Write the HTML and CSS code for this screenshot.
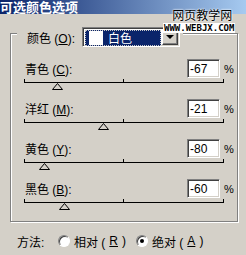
FILE: index.html
```html
<!DOCTYPE html>
<html lang="zh-CN">
<head>
  <meta charset="UTF-8">
  <title>可选颜色选项</title>
  <link rel="stylesheet" href="styles.css">
</head>
<body>
<div class="dialog">
  <div class="titlebar">可选颜色选项</div>

  <div class="watermark">
    <div class="wm-cn">网页教学网</div>
    <div class="wm-url">WWW.WEBJX.COM</div>
  </div>

  <fieldset class="group">
    <legend class="group-head">
      <span class="label">颜色 (<u>O</u>):</span>
      <span class="select">
        <span class="select-value"><span class="swatch"></span><span class="select-text">白色</span></span>
        <span class="select-btn"><span class="arrow"></span></span>
      </span>
    </legend>

    <div class="channels">
      <div class="channel">
        <div class="channel-top">
          <span class="label">青色 (<u>C</u>):</span>
          <span class="field">-67</span>
          <span class="pct">%</span>
        </div>
        <div class="slider">
          <span class="thumb" style="left: 16.5%"><svg width="11" height="7"><path d="M5.5 0.5 L10.5 6.5 L0.5 6.5 Z" fill="none" stroke="#000"/></svg></span>
        </div>
      </div>

      <div class="channel">
        <div class="channel-top">
          <span class="label">洋红 (<u>M</u>):</span>
          <span class="field">-21</span>
          <span class="pct">%</span>
        </div>
        <div class="slider">
          <span class="thumb" style="left: 39.5%"><svg width="11" height="7"><path d="M5.5 0.5 L10.5 6.5 L0.5 6.5 Z" fill="none" stroke="#000"/></svg></span>
        </div>
      </div>

      <div class="channel">
        <div class="channel-top">
          <span class="label">黄色 (<u>Y</u>):</span>
          <span class="field">-80</span>
          <span class="pct">%</span>
        </div>
        <div class="slider">
          <span class="thumb" style="left: 10%"><svg width="11" height="7"><path d="M5.5 0.5 L10.5 6.5 L0.5 6.5 Z" fill="none" stroke="#000"/></svg></span>
        </div>
      </div>

      <div class="channel">
        <div class="channel-top">
          <span class="label">黑色 (<u>B</u>):</span>
          <span class="field">-60</span>
          <span class="pct">%</span>
        </div>
        <div class="slider">
          <span class="thumb" style="left: 20%"><svg width="11" height="7"><path d="M5.5 0.5 L10.5 6.5 L0.5 6.5 Z" fill="none" stroke="#000"/></svg></span>
        </div>
      </div>
    </div>
  </fieldset>

  <div class="method">
    <span class="method-label">方法:</span>
    <span class="option"><span class="radio"></span>相对 (<u>R</u>)</span>
    <span class="option"><span class="radio checked"></span>绝对 (<u>A</u>)</span>
  </div>
</div>
</body>
</html>
```

FILE: styles.css
```css
body {
  margin: 0;
  background-color: #d4d0c8;
  font-family: "Liberation Sans", "Noto Sans CJK SC", sans-serif;
  font-size: 12px;
  color: #000;
}
.dialog {
  position: relative;
  width: 246px;
  height: 255px;
  overflow: hidden;
}
.titlebar {
  height: 14px;
  line-height: 14px;
  background: linear-gradient(to right, #0a246a, #a6caf0);
  color: #fff;
  font-family: "Noto Sans CJK SC", sans-serif;
  font-size: 13px;
  font-weight: bold;
  white-space: nowrap;
}
.watermark {
  position: absolute;
  top: 8px;
  left: 163px;
  text-align: center;
}
.wm-cn {
  font-family: "Noto Sans CJK SC", sans-serif;
  font-size: 12px;
  line-height: 14px;
  padding-left: 6px;
  text-shadow: 0 0 2px #fff, 0 0 2px #fff;
}
.wm-url {
  margin-top: 1px;
  padding: 0 1px;
  background-color: #fff;
  font-family: "DejaVu Sans Mono", monospace;
  font-size: 9px;
  font-weight: bold;
  line-height: 10px;
}
.group {
  margin: 6px 8px 0 10px;
  padding: 0 0 10px 0;
  border: 1px solid #808080;
  box-shadow: inset 1px 1px 0 #fff, 1px 1px 0 #fff;
  min-width: 0;
}
.group-head {
  display: flex;
  align-items: center;
  margin-left: 6px;
  padding: 7px 3px 0 10px;
  background-color: #d4d0c8;
}
.select {
  display: flex;
  margin-left: 7px;
  width: 98px;
  height: 20px;
  box-sizing: border-box;
  padding: 1px;
  border: 1px solid;
  border-color: #808080 #fff #fff #808080;
  box-shadow: inset 1px 1px 0 #404040, inset -1px -1px 0 #d4d0c8;
  background-color: #fff;
}
.select-value {
  display: block;
  width: 76px;
  height: 16px;
  margin: 1px;
  box-sizing: border-box;
  padding: 1px 0 0 4px;
  background-color: #0a246a;
  outline: 1px dotted #c8c8c8;
  outline-offset: -1px;
  color: #fff;
  font-family: "Noto Sans CJK SC", sans-serif;
  line-height: 14px;
  white-space: nowrap;
}
.swatch {
  display: inline-block;
  width: 14px;
  height: 14px;
  vertical-align: top;
  background-color: #fff;
}
.select-text {
  display: inline-block;
  margin-left: 5px;
  vertical-align: top;
}
.select-btn {
  flex: none;
  display: flex;
  align-items: center;
  justify-content: center;
  width: 16px;
  box-sizing: border-box;
  border: 1px solid;
  border-color: #fff #404040 #404040 #fff;
  box-shadow: inset -1px -1px 0 #808080;
  background-color: #d4d0c8;
}
.arrow {
  width: 0;
  height: 0;
  border-left: 4px solid transparent;
  border-right: 4px solid transparent;
  border-top: 4px solid #000;
}
.channels {
  display: flex;
  flex-direction: column;
  gap: 8px;
  padding-top: 12px;
}
.channel-top {
  display: flex;
  align-items: center;
  height: 19px;
  padding-left: 14px;
}
.channel-top .label {
  flex: 1;
}
.field {
  width: 33px;
  height: 19px;
  box-sizing: border-box;
  padding: 2px 0 0 2px;
  border: 1px solid;
  border-color: #808080 #fff #fff #808080;
  box-shadow: inset 1px 1px 0 #404040, inset -1px -1px 0 #d4d0c8;
  background-color: #fff;
  line-height: 14px;
}
.pct {
  width: 13px;
  padding-left: 4px;
  font-size: 11px;
}
.slider {
  position: relative;
  width: 200px;
  height: 13px;
  margin-left: 13px;
  background:
    linear-gradient(#000, #000) 0 1px / 1px 3px no-repeat,
    linear-gradient(#000, #000) 99px 1px / 1px 3px no-repeat,
    linear-gradient(#000, #000) 199px 1px / 1px 3px no-repeat,
    linear-gradient(#000, #000) 0 4px / 100% 1px no-repeat;
}
.thumb {
  position: absolute;
  top: 5px;
  margin-left: -5px;
  width: 11px;
  height: 7px;
}
.thumb svg {
  display: block;
}
.method {
  display: flex;
  align-items: center;
  height: 14px;
  margin-top: 12px;
  padding-left: 17px;
}
.method-label {
  width: 41px;
}
.option {
  display: flex;
  align-items: center;
  gap: 4px;
}
.option + .option {
  margin-left: 10px;
}
.radio {
  position: relative;
  flex: none;
  width: 12px;
  height: 12px;
  box-sizing: border-box;
  border-radius: 50%;
  border: 1px solid;
  border-color: #808080 #fff #fff #808080;
  box-shadow: inset 1px 1px 0 #404040;
  background-color: #fff;
}
.radio.checked::after {
  content: "";
  position: absolute;
  left: 3px;
  top: 3px;
  width: 4px;
  height: 4px;
  border-radius: 50%;
  background-color: #000;
}
```
